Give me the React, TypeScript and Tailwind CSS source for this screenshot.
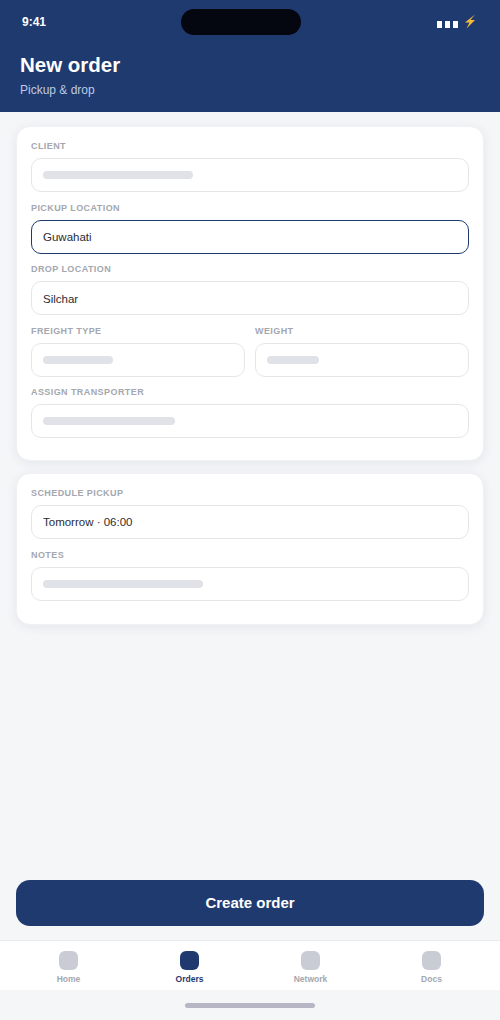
const font = { fontFamily: "'Liberation Sans', Arial, sans-serif" };

function Label({ children }: { children: string }) {
  return <div className="mb-[7px] h-[11px] text-[9px] leading-[13px] font-bold tracking-[0.42px] text-[#a4a7af] uppercase">{children}</div>;
}

function Field({ label, value, bar, focus }: { label: string; value?: string; bar?: number; focus?: boolean }) {
  return (
    <div className="mb-[9.6px] min-w-0 flex-1">
      <Label>{label}</Label>
      <div
        className={`flex h-[34px] items-center rounded-[10px] border bg-white px-[11px] text-[11.5px] text-[#2a2d33] ${
          focus ? "border-[#1f3a6e]" : "border-[#e4e6ea]"
        }`}
      >
        {value ? <span className="pt-[2px]">{value}</span> : null}
        {bar ? <div className="h-2 rounded-full bg-[#e0e2e8]" style={{ width: bar }} /> : null}
      </div>
    </div>
  );
}

function Tab({ name, active }: { name: string; active?: boolean }) {
  return (
    <div className="flex flex-1 flex-col items-center pt-[10px]">
      <div className={`h-[19px] w-[19px] rounded-[6px] ${active ? "bg-[#1f3a6e]" : "bg-[#c9ccd4]"}`} />
      <div className={`mt-[3px] text-[8.5px] leading-[12px] font-bold ${active ? "text-[#1f3a6e]" : "text-[#a4a7af]"}`}>{name}</div>
    </div>
  );
}

export default function App() {
  return (
    <div className="flex h-[1020px] w-[500px] flex-col overflow-hidden bg-[#f5f6f8]" style={font}>
      <header className="h-[112px] shrink-0 bg-[#1f3a6e] text-white">
        <div className="relative flex h-[44px] items-center justify-between pr-[24px] pl-[22px]">
          <span className="text-[12px] font-bold">9:41</span>
          <div className="absolute top-[9px] left-[181px] h-[26px] w-[120px] rounded-[13px] bg-[#04070f]" />
          <div className="flex items-center gap-[3px]">
            <span className="mt-[4px] h-[7px] w-[5px] bg-white" />
            <span className="mt-[4px] h-[7px] w-[5px] bg-white" />
            <span className="mt-[4px] h-[7px] w-[5px] bg-white" />
            <svg className="mb-[1px] ml-[3px]" width="12" height="15" viewBox="0 0 12 15">
              <path d="M11 0.5 L1 8.5 H5.5 L2.5 14.5 L11 6 H6.5 Z" fill="#f5b93c" />
            </svg>
          </div>
        </div>
        <div className="pl-5">
          <h1 className="mt-[8px] text-[20.5px] leading-[26px] font-bold">New order</h1>
          <p className="mt-[5px] text-[12px] leading-[14px] text-[#bccbe4]">Pickup &amp; drop</p>
        </div>
      </header>

      <main className="flex flex-1 flex-col gap-[12px] px-4 pt-[14px]">
        <section className="rounded-[14px] border border-[#f0f1f3] bg-white px-[14px] pt-[13px] pb-[12px] shadow-[0_2px_12px_rgba(20,30,50,0.07)]">
          <Field label="Client" bar={150} />
          <Field label="Pickup location" value="Guwahati" focus />
          <Field label="Drop location" value="Silchar" />
          <div className="flex gap-[10px]">
            <Field label="Freight type" bar={70} />
            <Field label="Weight" bar={52} />
          </div>
          <Field label="Assign transporter" bar={132} />
        </section>

        <section className="rounded-[14px] border border-[#f0f1f3] bg-white px-[14px] pt-[13px] pb-[14px] shadow-[0_2px_12px_rgba(20,30,50,0.07)]">
          <Field label="Schedule pickup" value="Tomorrow · 06:00" />
          <Field label="Notes" bar={160} />
        </section>
      </main>

      <div className="px-4 pb-[14px]">
        <button className="h-[46px] w-full rounded-[14px] bg-[#1f3a6e] text-[15px] font-bold text-white">Create order</button>
      </div>

      <nav className="flex h-[50px] shrink-0 border-t border-[#e9eaee] bg-white px-2">
        <Tab name="Home" />
        <Tab name="Orders" active />
        <Tab name="Network" />
        <Tab name="Docs" />
      </nav>

      <div className="flex h-[30px] shrink-0 justify-center pt-[13px]">
        <div className="h-[5px] w-[130px] rounded-full bg-[#b5b7c4]" />
      </div>
    </div>
  );
}
